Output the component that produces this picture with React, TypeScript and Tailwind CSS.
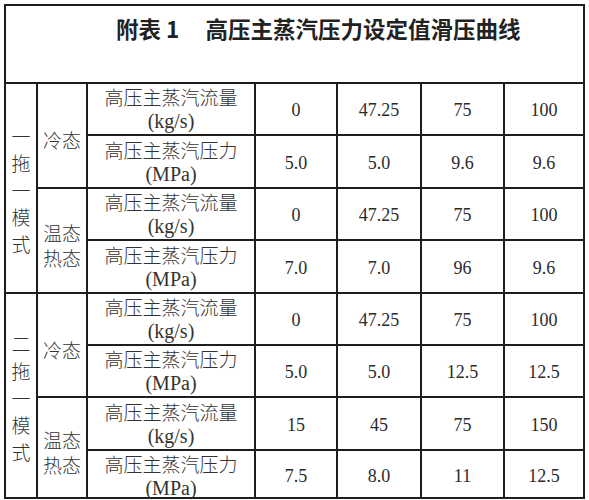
const cjk = "font-[family-name:'Noto_Sans_CJK_SC',sans-serif]";
const serif = "font-[family-name:'Liberation_Serif','Noto_Sans_CJK_SC',serif]";

type Row = { kind: "flow" | "press"; values: string[] };

const groups: { mode: string; states: { label: string[]; rows: Row[] }[] }[] = [
  {
    mode: "一拖一模式",
    states: [
      {
        label: ["冷态"],
        rows: [
          { kind: "flow", values: ["0", "47.25", "75", "100"] },
          { kind: "press", values: ["5.0", "5.0", "9.6", "9.6"] },
        ],
      },
      {
        label: ["温态", "热态"],
        rows: [
          { kind: "flow", values: ["0", "47.25", "75", "100"] },
          { kind: "press", values: ["7.0", "7.0", "96", "9.6"] },
        ],
      },
    ],
  },
  {
    mode: "二拖一模式",
    states: [
      {
        label: ["冷态"],
        rows: [
          { kind: "flow", values: ["0", "47.25", "75", "100"] },
          { kind: "press", values: ["5.0", "5.0", "12.5", "12.5"] },
        ],
      },
      {
        label: ["温态", "热态"],
        rows: [
          { kind: "flow", values: ["15", "45", "75", "150"] },
          { kind: "press", values: ["7.5", "8.0", "11", "12.5"] },
        ],
      },
    ],
  },
];

function ItemCell({ kind, last }: { kind: "flow" | "press"; last: boolean }) {
  return (
    <div
      className={`bg-white min-h-0 flex flex-col items-center text-[#333] leading-[25px] ${
        last ? "justify-start overflow-visible" : "justify-center"
      }`}
    >
      <span className={`${cjk} font-light text-[19px]`}>
        {kind === "flow" ? "高压主蒸汽流量" : "高压主蒸汽压力"}
      </span>
      <span className={`${serif} text-[20px]`}>
        {kind === "flow" ? "(kg/s)" : "(MPa)"}
      </span>
    </div>
  );
}

export default function App() {
  let rowIndex = 0;
  return (
    <div className="w-[589px] h-[500px] bg-white pl-[4px] pt-[4px]">
      <div className="w-[581px] bg-[#1e1e1e] p-[2px] grid gap-[2px] grid-cols-[30px_48px_166px_80px_82px_81px_78px] grid-rows-[76px_50px_51px_50px_51px_50px_50px_51px_46px]">
        <div className="col-span-7 bg-white pl-[110px] pt-[7px]">
          <div className={`${cjk} font-bold text-[22.5px] leading-[30px] text-[#222] flex`}>
            <span>附表 1</span>
            <span className="ml-[26px]">高压主蒸汽压力设定值滑压曲线</span>
          </div>
        </div>

        {groups.map((g) => (
          <>
            <div
              key={g.mode}
              className={`row-span-4 bg-white flex flex-col items-center justify-center pt-[3px] ${cjk} font-light text-[19px] leading-[27px] text-[#333]`}
            >
              {g.mode.split("").map((c, i) => (
                <span key={i}>{c}</span>
              ))}
            </div>
            {g.states.map((s) => (
              <>
                <div
                  className={`row-span-2 bg-white flex flex-col items-center justify-center pt-[8px] ${cjk} font-light text-[19px] leading-[25px] text-[#333]`}
                >
                  {s.label.map((l) => (
                    <span key={l}>{l}</span>
                  ))}
                </div>
                {s.rows.map((r) => {
                  rowIndex++;
                  const last = rowIndex === 8;
                  return (
                    <>
                      <ItemCell kind={r.kind} last={last} />
                      {r.values.map((v, i) => (
                        <div
                          key={i}
                          className={`bg-white min-h-0 flex items-center justify-center ${serif} text-[18px] text-[#2b2b2b] ${
                            last ? "pt-[4px]" : "pt-[3px]"
                          }`}
                        >
                          {v}
                        </div>
                      ))}
                    </>
                  );
                })}
              </>
            ))}
          </>
        ))}
      </div>
    </div>
  );
}
